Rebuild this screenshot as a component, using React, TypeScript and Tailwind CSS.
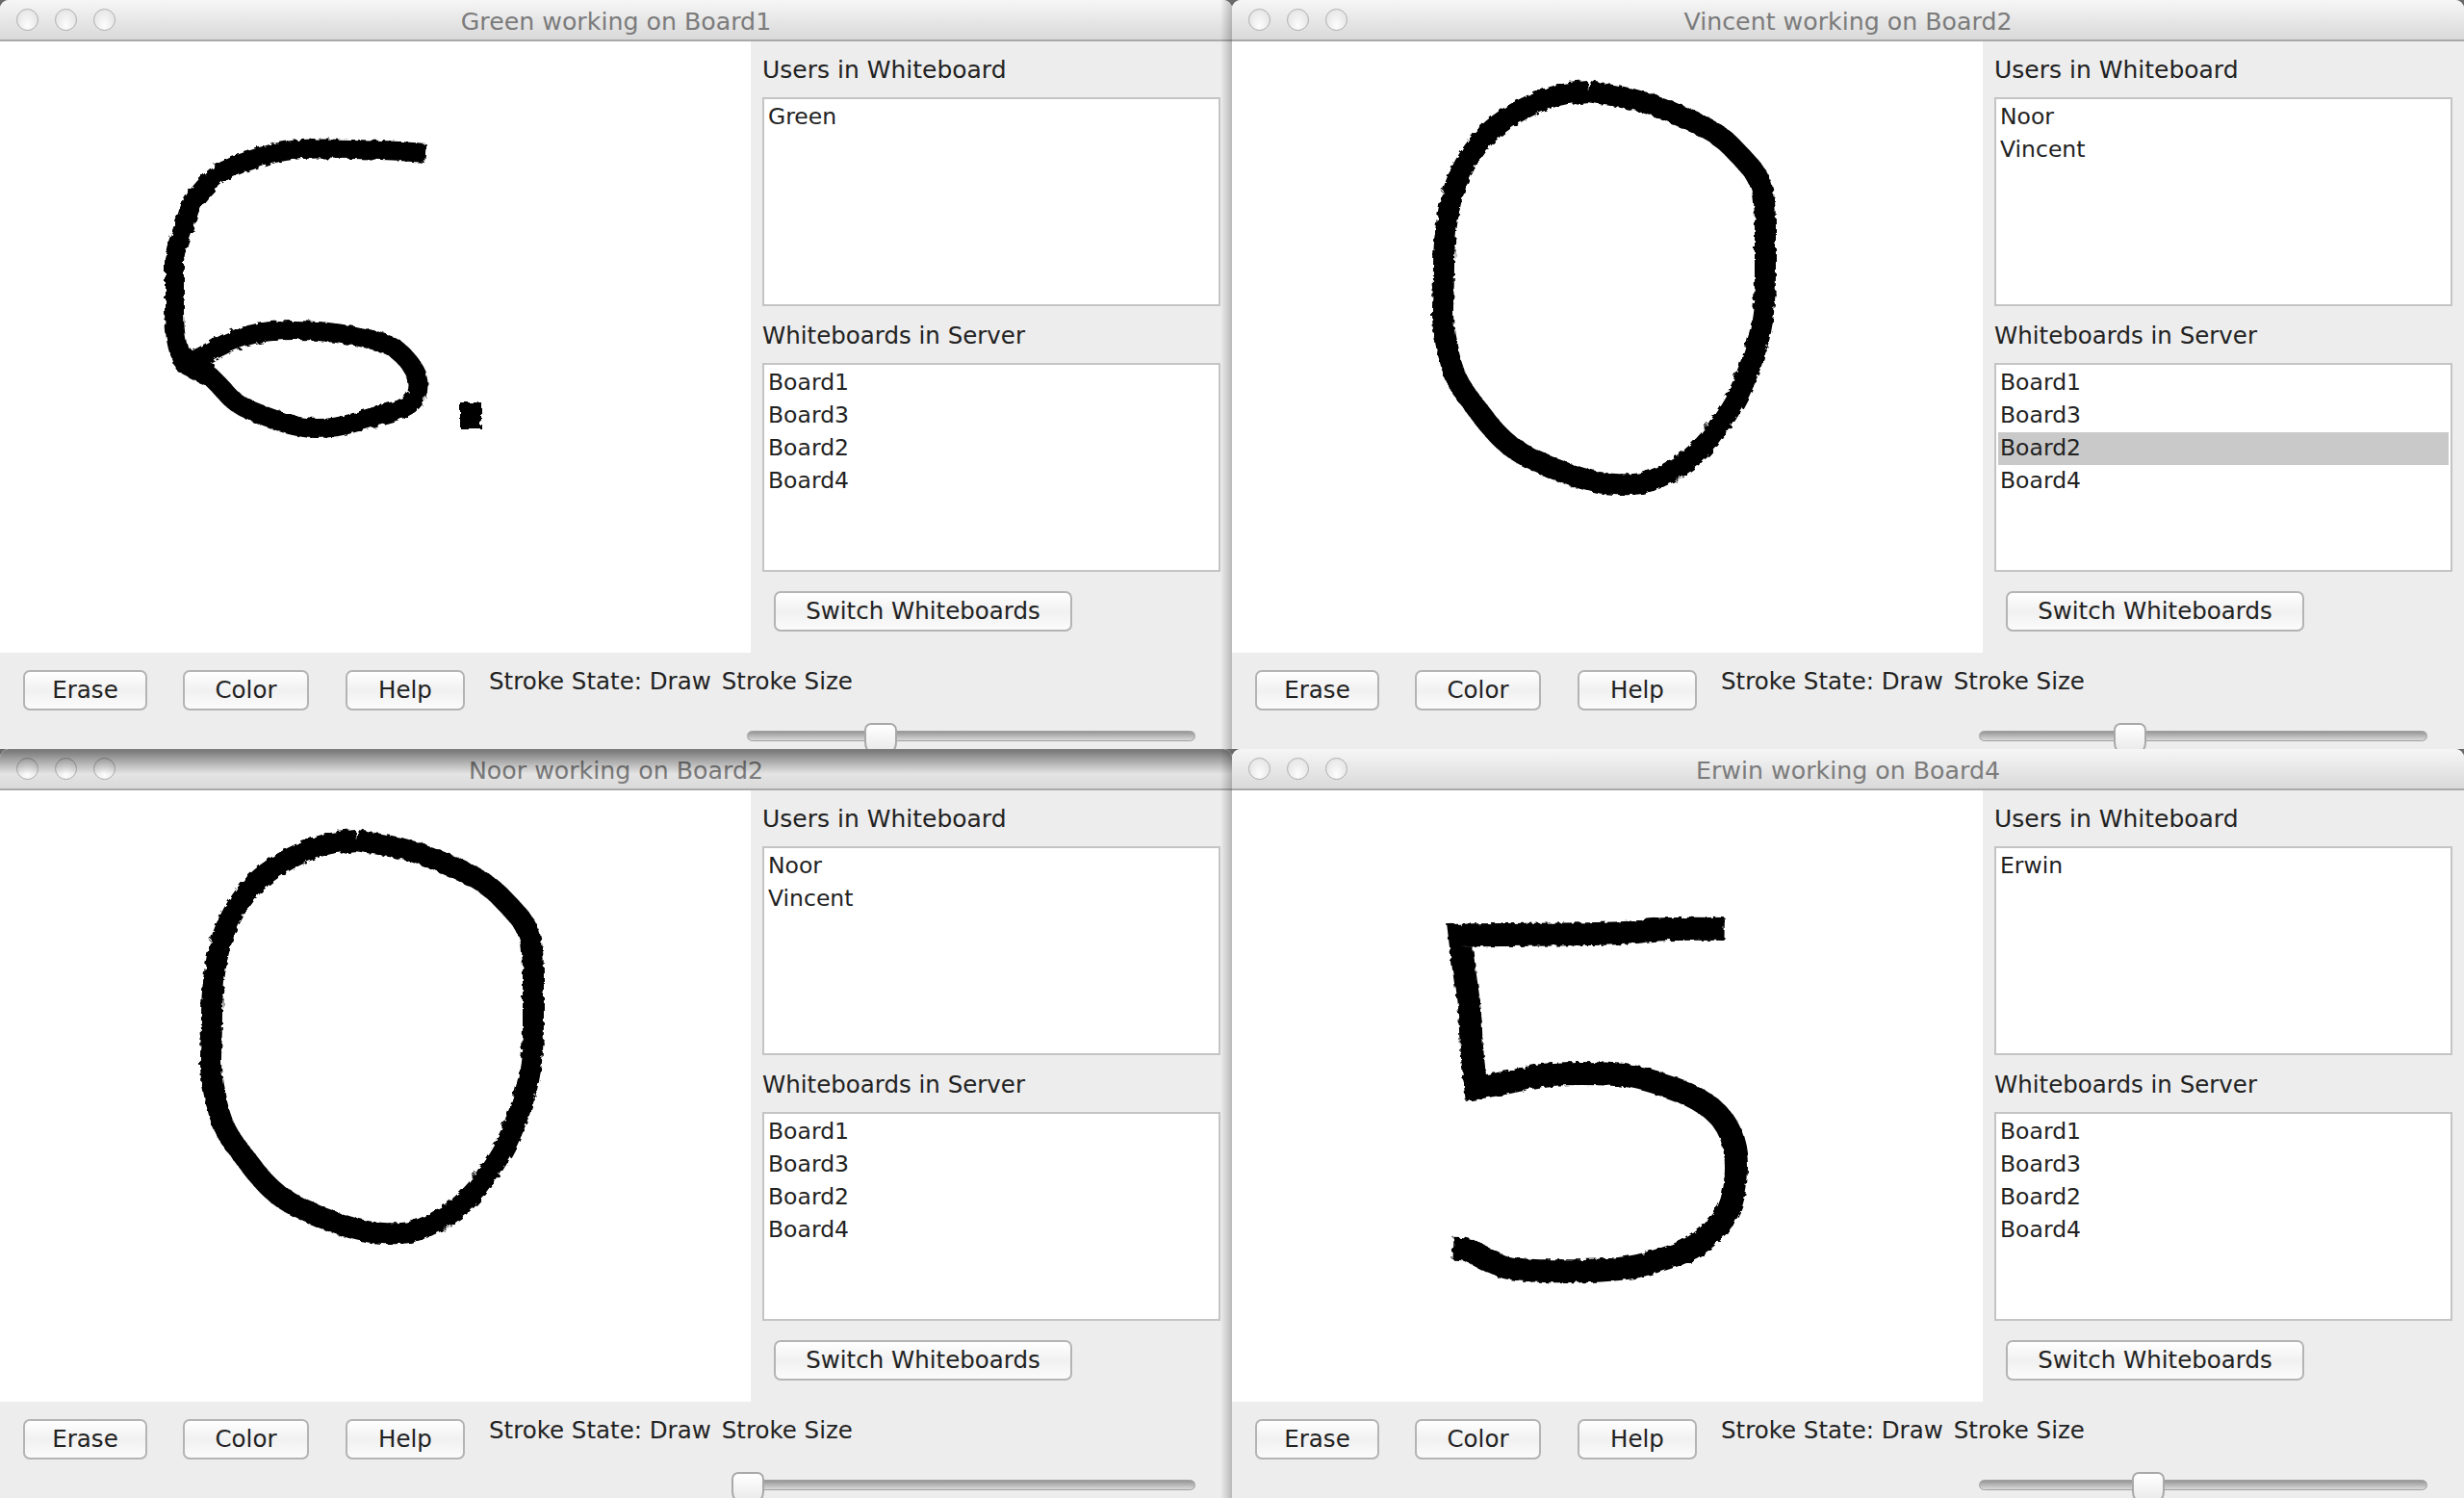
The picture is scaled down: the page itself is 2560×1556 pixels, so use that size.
import { useId } from "react";

const FONT = "font-['DejaVu_Sans',sans-serif]";

type Stroke = { width: number; points: number[][]; corners?: number[] };

// traced off the screenshot, coordinates are canvas pixels
const zoomed = (pts: number[][], dx: number, dy: number) =>
  pts.map(([x, y]) => [dx + x / 3, dy + y / 3]);

const ZERO: Stroke = {
  width: 22,
  points: zoomed(
    [
      [630, 105], [730, 120], [830, 145], [940, 190], [1040, 240], [1110, 310], [1165, 375], [1182, 450],
      [1182, 600], [1182, 740], [1170, 850], [1140, 950], [1100, 1050], [1050, 1130], [1010, 1190], [950, 1250],
      [880, 1295], [800, 1330], [700, 1330], [620, 1315], [520, 1280], [420, 1235], [350, 1180], [280, 1090],
      [220, 1010], [190, 910], [175, 820], [180, 700], [180, 590], [195, 470], [220, 380], [270, 290],
      [330, 220], [420, 160], [530, 115], [630, 105],
    ],
    160,
    17,
  ),
};

const FIVE: Stroke = {
  width: 24,
  corners: [4, 8],
  points: zoomed(
    [
      [1055, 195], [850, 192], [760, 210], [320, 213], [230, 215], [240, 300], [262, 450], [265, 550], [280, 690],
      [400, 670], [500, 645], [720, 645], [820, 665], [950, 710], [1040, 770], [1085, 850], [1095, 950],
      [1080, 1050], [1040, 1120], [960, 1190], [850, 1230], [720, 1260], [400, 1262], [310, 1225], [255, 1192], [210, 1190],
    ],
    160,
    79,
  ),
};

const SIX: Stroke = {
  width: 20,
  corners: [12],
  points: [
    [442, 116], [404, 113], [368, 112], [307, 111], [268, 120], [232, 134], [219, 144], [199, 167], [192, 190],
    [181, 220], [181, 240], [181, 310], [192, 335], [210, 340], [228, 357], [245, 377], [277, 390], [312, 402],
    [348, 402], [388, 390], [429, 379], [437, 354], [424, 330], [402, 312], [335, 300], [277, 300], [241, 310],
    [210, 327], [196, 335],
  ],
};

// the thick knot where the 6 closes its loop
const SIX_KNOT: Stroke = {
  width: 24,
  points: [[188, 326], [198, 338], [218, 346]],
};

// quadratic through the midpoints so the traced strokes don't look polygonal
function smoothPath({ points, corners = [] }: Stroke) {
  let d = `M${points[0][0]} ${points[0][1]}`;
  for (let i = 1; i < points.length - 1; i++) {
    const [x, y] = points[i];
    const [nx, ny] = points[i + 1];
    d += corners.includes(i) ? ` L${x} ${y} L${(x + nx) / 2} ${(y + ny) / 2}` : ` Q${x} ${y} ${(x + nx) / 2} ${(y + ny) / 2}`;
  }
  const last = points[points.length - 1];
  return `${d} L${last[0]} ${last[1]}`;
}

function Drawing({ strokes, dot }: { strokes: Stroke[]; dot?: boolean }) {
  const id = useId();
  return (
    <svg width="780" height="635" viewBox="0 0 780 635" aria-hidden="true">
      <filter id={id} x="-5%" y="-5%" width="110%" height="110%">
        <feTurbulence type="fractalNoise" baseFrequency="0.16" numOctaves="2" seed="4" />
        <feDisplacementMap in="SourceGraphic" scale="6" />
      </filter>
      <g filter={`url(#${id})`}>
        {strokes.map((s, i) => (
          <path key={i} d={smoothPath(s)} fill="none" stroke="#000" strokeWidth={s.width} strokeLinejoin="miter" />
        ))}
        {dot && <rect x="478" y="375" width="22" height="27" fill="#000" />}
      </g>
    </svg>
  );
}

function Lights() {
  return (
    <div className="flex gap-[17px] pl-[17px]">
      {[0, 1, 2].map((i) => (
        <span
          key={i}
          className="h-[23px] w-[23px] rounded-full border border-[#aeaeae] bg-radial-[at_50%_80%] from-[#fdfdfd] to-[#dedede]"
        />
      ))}
    </div>
  );
}

function AquaButton({ label, className }: { label: string; className: string }) {
  return (
    <button
      className={`flex h-[42px] items-center justify-center rounded-[7px] border-2 border-[#b4b4b4] bg-linear-to-b from-white via-[#f1f1f1] to-[#fbfbfb] text-[24.5px] text-[#222] ${className}`}
    >
      {label}
    </button>
  );
}

function ListBox({ items, selected }: { items: string[]; selected?: string }) {
  return (
    <div className="mt-[11px] h-[217px] border-2 border-[#c4c4c4] bg-white px-[2px] pt-[2px] text-[23.5px] text-[#222]">
      {items.map((item) => (
        <div
          key={item}
          className={`flex h-[34px] items-center pl-[2px] ${item === selected ? "bg-[#c9c9c9]" : ""}`}
        >
          {item}
        </div>
      ))}
    </div>
  );
}

type WindowProps = {
  title: string;
  users: string[];
  selected?: string;
  thumb: number;
  strokes: Stroke[];
  dot?: boolean;
  shadowTop?: boolean;
  shadowRight?: boolean;
};

function BoardWindow({ title, users, selected, thumb, strokes, dot, shadowTop, shadowRight }: WindowProps) {
  return (
    <div className={`relative flex h-[778px] w-[1280px] flex-col overflow-hidden rounded-t-[9px] bg-[#ededed] ${FONT}`}>
      <div className="relative flex h-[43px] shrink-0 items-center border-b-2 border-[#a9a9a9] bg-linear-to-b from-[#f6f6f6] to-[#d9d9d9]">
        <Lights />
        <span className="absolute inset-x-0 top-[4px] text-center text-[25.25px] text-[#7b7b7b]">{title}</span>
      </div>

      <div className="flex h-[635px] shrink-0">
        <div className="w-[780px] shrink-0 bg-white">
          <Drawing strokes={strokes} dot={dot} />
        </div>
        <div className="w-[500px] px-3 pt-[13px]">
          <div className="flex h-[34px] items-center text-[25px] text-[#222]">Users in Whiteboard</div>
          <ListBox items={users} />
          <div className="mt-[14px] flex h-[34px] items-center text-[24.5px] text-[#222]">Whiteboards in Server</div>
          <ListBox items={["Board1", "Board3", "Board2", "Board4"]} selected={selected} />
          <AquaButton label="Switch Whiteboards" className="ml-[12px] mt-[20px] w-[310px]" />
        </div>
      </div>

      <div className="flex flex-1 items-start pl-6 pt-[18px]">
        <AquaButton label="Erase" className="w-[129px]" />
        <AquaButton label="Color" className="ml-[37px] w-[131px]" />
        <AquaButton label="Help" className="ml-[38px] w-[124px]" />
        <div className="ml-[25px]">
          <div className="-mt-[5px] flex h-[34px] items-center gap-[11px] whitespace-nowrap text-[24.5px] text-[#222]">
            <span>Stroke State: Draw</span>
            <span>Stroke Size</span>
          </div>
          <div className="relative ml-[268px] mt-[34px] h-[11px] w-[466px] rounded-full border border-[#a0a0a0] bg-linear-to-b from-[#969696] to-[#dadada]">
            <div
              className="absolute -top-[9px] h-[36px] w-[34px] rounded-t-[7px] rounded-b-[16px] border-2 border-[#a9a9a9] bg-linear-to-b from-white to-[#e6e6e6]"
              style={{ left: thumb - 776 - 1 }}
            />
          </div>
        </div>
      </div>

      {shadowTop && (
        <div className="pointer-events-none absolute inset-x-0 top-0 h-[26px] border-t-2 border-[#7c7c7c] bg-linear-to-b from-[#00000080] to-transparent" />
      )}
      {shadowRight && (
        <div className="pointer-events-none absolute inset-y-0 right-0 w-[12px] bg-linear-to-r from-transparent to-[#00000038]" />
      )}
    </div>
  );
}

export default function App() {
  return (
    <div className="grid h-[1556px] w-[2560px] grid-cols-[1280px_1280px] grid-rows-[778px_778px] overflow-hidden bg-[#6a6a6a]">
      <BoardWindow title="Green working on Board1" users={["Green"]} thumb={898} strokes={[SIX, SIX_KNOT]} dot shadowRight />
      <BoardWindow title="Vincent working on Board2" users={["Noor", "Vincent"]} selected="Board2" thumb={916} strokes={[ZERO]} />
      <BoardWindow title="Noor working on Board2" users={["Noor", "Vincent"]} thumb={760} strokes={[ZERO]} shadowTop shadowRight />
      <BoardWindow title="Erwin working on Board4" users={["Erwin"]} thumb={935} strokes={[FIVE]} />
    </div>
  );
}
